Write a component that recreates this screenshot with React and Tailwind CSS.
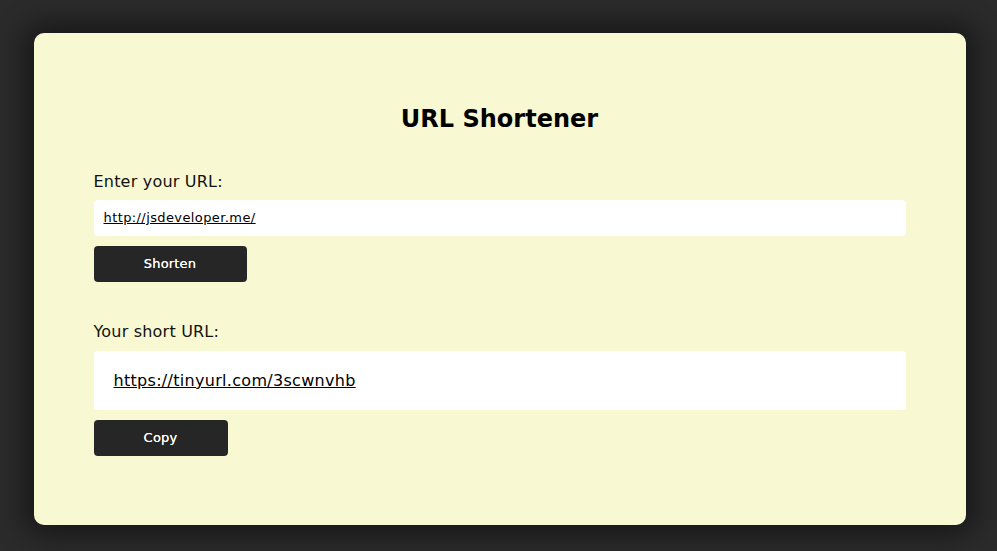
export default function App() {
  return (
    <div
      className="min-h-screen w-full bg-[#2b2b2b] flex justify-center pt-[33px] pl-[2px]"
      style={{ fontFamily: '"DejaVu Sans", Verdana, sans-serif' }}
    >
      <div className="w-[932px] h-[492px] bg-[#f8f9d3] rounded-[10px] shadow-[0_0_28px_10px_rgba(0,0,0,0.45)] px-[60px] pt-[101px] flex flex-col">
        {/* HEADER */}
        <h1 className="text-[24px] leading-[36px] font-bold text-black text-center -mt-[33px]">
          URL Shortener
        </h1>

        {/* INPUT */}
        <label className="mt-[33px] text-[16px] leading-[24px] text-[#111] tracking-[0.2px]">
          Enter your URL:
        </label>
        <div className="mt-[6px] h-[36px] bg-white rounded-[4px] flex items-center px-[10px]">
          <span className="text-[13px] text-black underline tracking-[0.4px]">http://jsdeveloper.me/</span>
        </div>
        <button className="mt-[10px] w-[153px] h-[36px] bg-[#262626] rounded-[4px] text-white text-[13px] font-medium tracking-[0.2px] [text-shadow:0_0_0.4px_white]">
          Shorten
        </button>

        {/* RESULT */}
        <label className="mt-[38px] text-[16px] leading-[24px] text-[#111] tracking-[0.2px]">
          Your short URL:
        </label>
        <div className="mt-[7px] h-[59px] bg-white rounded-[4px] flex items-center px-[20px] pt-[1px]">
          <a className="text-[16px] text-black underline tracking-[0.3px]">https://tinyurl.com/3scwnvhb</a>
        </div>
        <button className="mt-[10px] w-[134px] h-[36px] bg-[#262626] rounded-[4px] text-white text-[13px] font-medium tracking-[0.2px] [text-shadow:0_0_0.4px_white]">
          Copy
        </button>
      </div>
    </div>
  );
}
